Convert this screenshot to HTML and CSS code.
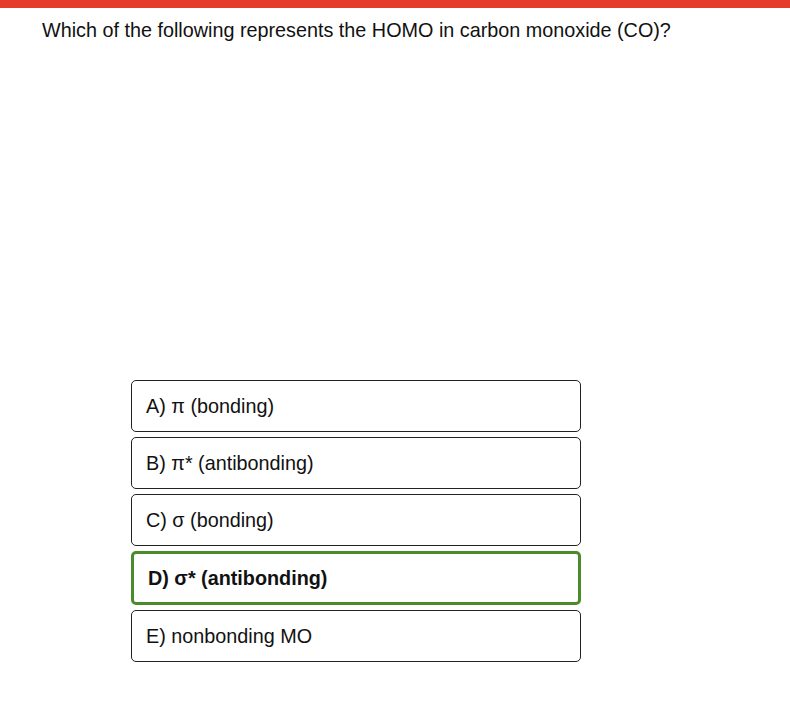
FILE: index.html
```html
<!DOCTYPE html>
<html>
<head>
<meta charset="utf-8">
<link rel="stylesheet" href="styles.css">
</head>
<body>
<div class="topbar"></div>
<p class="question">Which of the following represents the HOMO in carbon monoxide (CO)?</p>
<div class="options">
  <div class="option">A) π (bonding)</div>
  <div class="option">B) π* (antibonding)</div>
  <div class="option">C) σ (bonding)</div>
  <div class="option selected">D) σ* (antibonding)</div>
  <div class="option">E) nonbonding MO</div>
</div>
</body>
</html>
```
FILE: styles.css
```css
html, body {
  margin: 0;
  padding: 0;
  background: #fff;
  font-family: "Liberation Sans", Arial, sans-serif;
  color: #111;
}
.topbar {
  height: 8px;
  background: #e63c2b;
}
.question {
  margin: 11px 0 0 42px;
  font-size: 19.8px;
  line-height: 23px;
}
.options {
  display: flex;
  flex-direction: column;
  gap: 5px;
  width: 450px;
  margin: 338px 0 0 131px;
}
.option {
  border: 1px solid #222;
  border-radius: 5px;
  padding: 14px 14px 13px;
  font-size: 19.8px;
  line-height: 23px;
}
.option.selected {
  border: 3px solid #4a8b2c;
  padding: 13px 14px 12px;
  font-weight: bold;
}
```
